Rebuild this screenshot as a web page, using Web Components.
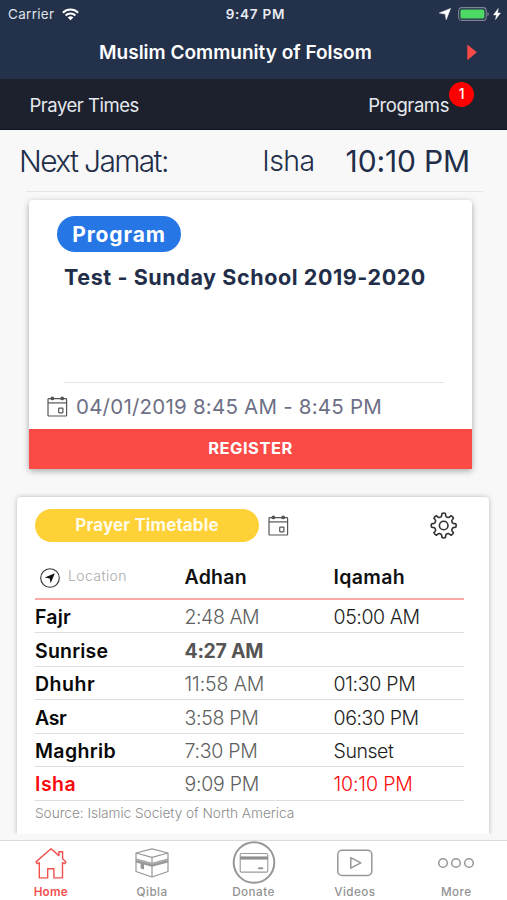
<!DOCTYPE html>
<html lang="en">
<head>
<meta charset="utf-8">
<title>Muslim Community of Folsom</title>
<style>
body { margin: 0; background: #f8f8f8; }
</style>
</head>
<body>
<prayer-app></prayer-app>
<script>
// One line of text: size, weight (w), tracking (ls) and colour (c) come from attributes.
class UiText extends HTMLElement {
  connectedCallback() {
    const a = n => this.getAttribute(n);
    this.attachShadow({ mode: 'open' }).innerHTML = `<style>
      :host { display: block; white-space: nowrap; line-height: 1.2; font-family: Inter, "Liberation Sans", sans-serif;
        font-size: ${a('size')}px; font-weight: ${a('w') || 400}; letter-spacing: ${a('ls') || 0}px; ${a('c') ? 'color:' + a('c') : ''} }
    </style><slot></slot>`;
  }
}
customElements.define('ui-text', UiText);

let gear = '';
for (let i = 0; i < 8; i++) {
  const p = (r, d) => { const t = (i * 45 + d - 90) * Math.PI / 180; return (13.7 + r * Math.cos(t)).toFixed(2) + ' ' + (13.5 + r * Math.sin(t)).toFixed(2); };
  gear += (i ? 'L' : 'M') + p(9.3, -15) + 'Q' + p(10, -11) + ' ' + p(10.9, -10) + 'L' + p(12.2, -8) + 'Q' + p(12.9, 0) + ' ' + p(12.2, 8) + 'L' + p(10.9, 10) + 'Q' + p(10, 11) + ' ' + p(9.3, 15) + 'Q' + p(8.9, 22.5) + ' ' + p(9.3, 30);
}
gear += 'Z';
const ICONS = {
  wifi: [17, 13, '<g fill="none" stroke="#fff" stroke-width="2.1"><path d="M.9 4.7a10.8 10.8 0 0 1 15.2 0"/><path d="M3.6 7.6a6.9 6.9 0 0 1 9.8 0"/></g><path d="M8.5 12.3l-2.8-2.8a4 4 0 0 1 5.6 0z" fill="#fff"/>'],
  arrow: [12, 12, '<path d="M11.6.4L7.2 11.7 6.2 6.1.3 5z" fill="#fff" stroke="#fff" stroke-width=".5" stroke-linejoin="round"/>'],
  battery: [31, 14, '<rect x=".6" y=".6" width="27.6" height="12.8" rx="3.2" fill="none" stroke="#7d8794" stroke-width="1.1"/><rect x="2.4" y="2.4" width="24" height="9.2" rx="1.6" fill="#4cd964"/><path d="M29.4 5v4q1.5-.5 1.5-2t-1.5-2z" fill="#7d8794"/>'],
  bolt: [8, 12, '<path d="M5.3.4L.4 6.9h3L2.5 11.6l5-6.7H4.6z" fill="#fff" stroke="#fff" stroke-width=".4"/>'],
  play: [10, 17, '<path d="M.3.4L9.8 8.3.3 16.2z" fill="#fb4b47"/>'],
  calendar: [21, 21, '<g fill="none" stroke="#555" stroke-width="1.2"><rect x="1" y="2.6" width="18.6" height="17.4" rx=".8"/><path d="M1 6.9h18.6"/><rect x="11.7" y="12.2" width="4.2" height="4.6" rx=".5"/></g><g fill="#555"><circle cx="5.4" cy="2.4" r="1.9"/><circle cx="15.2" cy="2.4" r="1.9"/></g>'],
  gear: [28, 28, `<g fill="none" stroke="#333" stroke-width="1.6" stroke-linejoin="round"><path d="${gear}"/><circle cx="13.7" cy="13.5" r="4.3"/></g>`],
  locate: [20, 20, '<circle cx="10" cy="10" r="9.3" fill="none" stroke="#333" stroke-width="1.1"/><path d="M14.8 5.3L10.7 15.3 9.7 10.6 4.8 9.6z" fill="#111"/>'],
  home: [32, 32, '<g fill="none" stroke="#f4504e" stroke-width="1.4" stroke-linejoin="round"><path d="M16 1.7L1 14.9 2.2 16.7 4.3 15.7V30.9H12.7V21.7H18.9V30.9H27.5V15.7L29.8 16.7 31 14.9 27.6 11.8V4.7H23.9V8.6Z"/></g>'],
  qibla: [34, 30, '<g fill="none" stroke="#979797" stroke-width="1.2" stroke-linejoin="round"><path d="M17 .8L33 5V23.5L17 29 1 23.5V5Z"/><path d="M1 5L17 9.3 33 5M17 9.3V29"/></g><path d="M1 10.6L17 14.8 33 10.6V14.4L17 18.8 1 14.4Z" fill="#979797"/><path d="M1 11.8L17 16 33 11.8" stroke="#c8c8c8" stroke-width=".6" fill="none"/><path d="M5.6 15.2L9 16.1V21.6L5.6 20.6z" fill="#979797"/>'],
  donate: [44, 44, '<circle cx="22" cy="21.5" r="20.3" fill="none" stroke="#979797" stroke-width="2"/><rect x="8.2" y="12.5" width="27.6" height="18.6" rx="1.4" fill="none" stroke="#999" stroke-width="1.1"/><path d="M8.2 15.4h27.6v3.2H8.2z" fill="#8f8f8f"/><path d="M25.5 27.2l2.2-1.5v.8h1.6v-.8l2.4 1.5-2.4 1.5v-.8h-1.6v.8z" fill="#8f8f8f"/>'],
  videos: [36, 28, '<g fill="none" stroke="#979797" stroke-width="1.5" stroke-linejoin="round"><rect x=".8" y="1.2" width="34" height="25.2" rx="4.2"/><path d="M13.8 8.6V19.2L23.8 13.9z"/></g>'],
  more: [38, 12, '<g fill="none" stroke="#979797" stroke-width="1.5"><circle cx="6" cy="6" r="4.3"/><circle cx="19" cy="6" r="4.3"/><circle cx="32" cy="6" r="4.3"/></g>']
};
class UiIcon extends HTMLElement {
  connectedCallback() {
    const [w, h, body] = ICONS[this.getAttribute('name')];
    this.attachShadow({ mode: 'open' }).innerHTML = `<style>:host { display: block; flex: none; width: ${w}px; height: ${h}px } svg { display: block }</style>
      <svg width="${w}" height="${h}" viewBox="0 0 ${w} ${h}">${body}</svg>`;
  }
}
customElements.define('ui-icon', UiIcon);

function define(name, html) {
  const tpl = document.createElement('template');
  tpl.innerHTML = html;
  customElements.define(name, class extends HTMLElement {
    constructor() {
      super();
      this.attachShadow({ mode: 'open' }).append(tpl.content.cloneNode(true));
    }
  });
}

define('status-bar', `<style>
  :host { display: grid; grid-template-columns: 1fr auto 1fr; align-items: center; height: 28px; padding: 0 6px 0 8px; box-sizing: border-box; color: #fff; }
  div { display: flex; align-items: center; }
  .l { gap: 8px; } .r { justify-content: flex-end; }
  .r ui-icon + ui-icon { margin-left: 7px; } .r ui-icon:last-child { margin-left: 4px; }
</style>
<div class="l"><ui-text size="13.5" ls=".3" c="#dfe3ea">Carrier</ui-text><ui-icon name="wifi"></ui-icon></div>
<ui-text size="13.5" w="600" ls=".76" c="#e9edf3">&#8202;9:47 PM</ui-text>
<div class="r"><ui-icon name="arrow"></ui-icon><ui-icon name="battery"></ui-icon><ui-icon name="bolt"></ui-icon></div>`);

define('title-bar', `<style>
  :host { display: flex; justify-content: space-between; align-items: center; height: 51px; padding: 0 30px 0 99px; box-sizing: border-box; }
  ui-text { margin-top: -1px } ui-icon { margin-top: -3px }
</style><ui-text size="19" w="600" ls=".01" c="#fff"><slot></slot></ui-text><ui-icon name="play"></ui-icon>`);

define('top-tabs', `<style>
  :host { display: flex; justify-content: space-between; align-items: center; height: 51px; padding: 2px 58px 0 29.5px; box-sizing: border-box; background: #1c212d; border-bottom: 1px solid #0f1420; }
  .p { position: relative; }
  .b { position: absolute; left: 81px; top: -12px; width: 25px; height: 25px; border-radius: 50%; background: #fe0000; display: grid; place-items: center; }
</style>
<ui-text size="18.5" ls="-.48" c="#e6e9ee">Prayer Times</ui-text>
<div class="p"><ui-text size="18.5" ls="-.42" c="#e6e9ee">Programs</ui-text><div class="b"><ui-text size="14" w="500" c="#fff">1</ui-text></div></div>`);

define('next-jamat', `<style>
  :host { display: flex; align-items: center; height: 62px; margin: 0 24px 0 26px; box-sizing: border-box; border-bottom: 1px solid #e6e6e6; color: #222e49; }
  .label { margin-left: -7px; margin-right: auto; } .name { margin-top: 2px; } .time { margin: 0 13px 0 31px; }
</style>
<ui-text class="label" size="30" w="300" ls="-1.65">Next Jamat:</ui-text><ui-text class="name" size="28.5" w="300" ls="-.6">Isha</ui-text><ui-text class="time" size="30" w="370" ls="-.15">10:10 PM</ui-text>`);

define('program-card', `<style>
  :host { display: flex; flex-direction: column; height: 269px; margin: 8px 35px 0 29px; background: #fff; border-radius: 4px 4px 0 0; box-shadow: 0 2px 6px rgba(0,0,0,.33); }
  .pill { align-self: flex-start; margin: 16px 0 0 28px; width: 124px; height: 36px; border-radius: 18px; background: #2776e6; display: grid; place-items: center; }
  .pill ui-text { margin-top: 1px; }
  .title { margin: 13px 0 0 35px; }
  .date { display: flex; align-items: center; margin: auto 28px 0 35px; height: 46px; border-top: 1px solid #e4e4e4; }
  .date ui-icon { margin: 0 8px 0 -17px; }
  .date ui-text { margin-top: 2px; }
  .reg { height: 40px; background: #fb4b47; display: grid; place-items: center; }
</style>
<div class="pill"><ui-text size="21" w="700" ls=".9" c="#fff">Program</ui-text></div>
<ui-text class="title" size="21.5" w="700" ls=".58" c="#222e49">Test - Sunday School 2019-2020</ui-text>
<div class="date"><ui-icon name="calendar"></ui-icon><ui-text size="20.5" ls=".22" c="#6d7086">04/01/2019 8:45 AM - 8:45 PM</ui-text></div>
<div class="reg"><ui-text size="16.5" w="700" ls=".5" c="#fff">REGISTER</ui-text></div>`);

class PrayerTable extends HTMLElement {
  connectedCallback() {
    const rows = [
      ['Fajr', .2, '2:48 AM', -.45, '05:00 AM', -.4], ['Sunrise', .2, '4:27 AM', -.3, '', 0],
      ['Dhuhr', .52, '11:58 AM', -.1, '01:30 PM', -.3], ['Asr', -.38, '3:58 PM', -.3, '06:30 PM', -.4],
      ['Maghrib', .36, '7:30 PM', -.25, 'Sunset', -.43], ['Isha', .5, '9:09 PM', -.25, '10:10 PM', -.12]];
    this.attachShadow({ mode: 'open' }).innerHTML = `<style>
      :host { display: block; }
      .row { display: grid; grid-template-columns: 149.5px 149px 1fr; align-items: center; height: 33.45px; padding-top: 3.5px; box-sizing: border-box; border-bottom: 1px solid #dedede; }
      .row.head { height: 46px; padding-top: 3px; border-bottom: 2px solid #fcaaa8; }
      .loc { display: flex; align-items: center; gap: 8px; padding-left: 5px; }
      .loc ui-text { margin-top: -2px; }
    </style>
    <div class="row head"><div class="loc"><ui-icon name="locate"></ui-icon><ui-text size="14" w="300" ls=".38" c="#aaa">Location</ui-text></div>
      <ui-text size="19.5" w="600" ls=".25" c="#111">Adhan</ui-text><ui-text size="19.5" w="600" ls=".35" c="#111">Iqamah</ui-text></div>` +
    rows.map(([n, nl, a, al, q, ql]) => {
      const on = n === 'Isha', sun = n === 'Sunrise';
      return `<div class="row"><ui-text size="19.5" w="600" ls="${nl}" c="${on ? '#fb0a0d' : '#080808'}">${n}</ui-text>
        <ui-text size="19.5" w="${sun ? 700 : 300}" ls="${al}" c="${sun ? '#555' : '#606060'}">${a}</ui-text>${q ? `<ui-text size="19.5" w="320" ls="${ql}" c="${on ? '#fb0a0d' : '#1c1c1c'}">${q}</ui-text>` : ''}</div>`;
    }).join('');
  }
}
customElements.define('prayer-table', PrayerTable);

define('timetable-card', `<style>
  :host { display: block; height: 337px; margin: 28px 18px 0 17px; padding: 12px 25px 0 18px; box-sizing: border-box; background: #fff; border-radius: 4px 4px 0 0; box-shadow: 0 0 5px rgba(0,0,0,.26); clip-path: inset(-8px -8px 0 -8px); }
  .top { display: flex; align-items: center; height: 33px; margin-bottom: 12px; }
  .pill { width: 224px; height: 33px; border-radius: 17px; background: #fed136; display: grid; place-items: center; margin-right: 9px; }
  .top ui-icon:last-child { margin: 0 6px 0 auto; }
  .src { margin-top: 4px; }
</style>
<div class="top"><div class="pill"><ui-text size="17" w="700" ls=".11" c="#fffbe8">Prayer Timetable</ui-text></div><ui-icon name="calendar"></ui-icon><ui-icon name="gear"></ui-icon></div>
<prayer-table></prayer-table>
<ui-text class="src" size="13.7" w="300" ls="-.05" c="#8c8c8c">Source: Islamic Society of North America</ui-text>`);

class TabItem extends HTMLElement {
  connectedCallback() {
    const on = this.hasAttribute('active');
    this.attachShadow({ mode: 'open' }).innerHTML = `<style>
      :host { display: flex; flex-direction: column; align-items: center; flex: 1; }
      div { height: 44px; display: grid; place-items: center; }
    </style><div><ui-icon name="${this.getAttribute('icon')}"></ui-icon></div>
    <ui-text size="11.7" w="${on ? 600 : 500}" ls="${on ? .22 : .45}" c="${on ? '#f4504e' : '#929292'}"><slot></slot></ui-text>`;
  }
}
customElements.define('tab-item', TabItem);

define('tab-bar', `<style>
  :host { display: flex; height: 60px; margin-top: 6px; box-sizing: border-box; background: #fff; border-top: 1px solid #dcdcdc; }
</style>
<tab-item icon="home" active>Home</tab-item><tab-item icon="qibla">Qibla</tab-item><tab-item icon="donate">Donate</tab-item><tab-item icon="videos">Videos</tab-item><tab-item icon="more">More</tab-item>`);

define('prayer-app', `<style>
  :host { display: flex; flex-direction: column; width: 507px; height: 900px; overflow: hidden; background: #f8f8f8; }
  header { background: #24314b; }
</style>
<header><status-bar></status-bar><title-bar>Muslim Community of Folsom</title-bar><top-tabs></top-tabs></header>
<next-jamat></next-jamat><program-card></program-card><timetable-card></timetable-card><tab-bar></tab-bar>`);
</script>
</body>
</html>
